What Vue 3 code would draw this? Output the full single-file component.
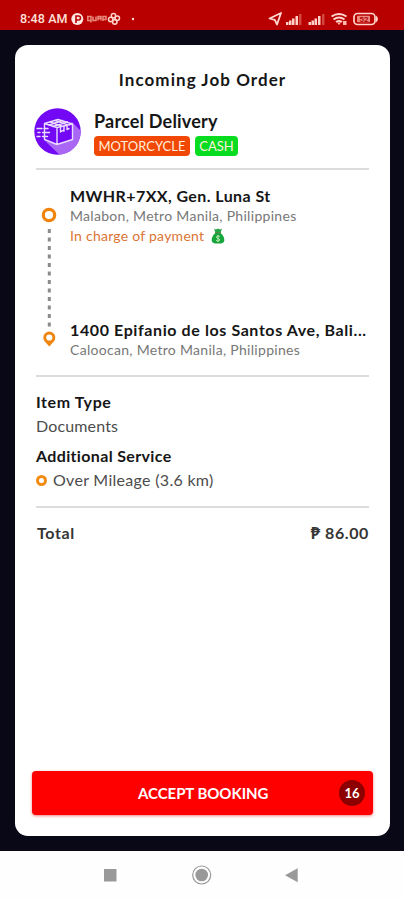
<script setup>
import { ref } from 'vue'

let time = ref('8:48 AM')
let battery = ref(52)
let countdown = ref(16)

let order = ref({
    service: 'Parcel Delivery',
    vehicle: 'MOTORCYCLE',
    payment: 'CASH',
    itemType: 'Documents',
    extras: ['Over Mileage (3.6 km)'],
    total: '86.00'
})

</script>

<template>
    <div class="screen">
        <header class="statusBar">
            <span class="time">{{ time }}</span>
            <svg class="notifs" width="68" height="14" viewBox="0 0 68 14">
                <circle cx="6.3" cy="7" r="6" fill="#ffe9e3" />
                <path d="M5 11V4h2.5a1.8 1.8 0 0 1 0 4H5" fill="none" stroke="#b80000" stroke-width="1.6" />
                <g fill="none" stroke="#e98b7c" stroke-width="1.5">
                    <path d="M20 4.5h-3.200v4H20zM20 8v2.500M22 4.500v4h3v-4M27 8.500v-4h3v4M27 6.500h3M32 9V4.500h3v3H32" />
                </g>
                <g fill="none" stroke="#ffd5cc" stroke-width="1.500">
                    <circle cx="42.500" cy="3.700" r="2.200" />
                    <circle cx="46.300" cy="6.200" r="2.200" />
                    <circle cx="43.800" cy="10" r="2.200" />
                    <circle cx="39.700" cy="7.500" r="2.200" />
                </g>
                <circle cx="62" cy="7" r="1.200" fill="#ffd5cc" />
            </svg>
            <svg class="system" width="114" height="16" viewBox="0 0 114 16">
                <path d="M1.500 7.500L13 2 9 13.500 6.800 8.800z" fill="none" stroke="#ffd9d2" stroke-width="1.800" stroke-linejoin="round" />
                <g fill="#ffd0c8">
                    <path d="M18 11h2.500v3H18zM21 9.500h2.500V14H21zM24 7.500h2.500V14H24zM27.500 5h2.500v9h-2.500z" />
                    <path d="M40.500 11H43v3h-2.500zM43.500 9.500H46V14h-2.500zM46.500 7.500H49V14h-2.500zM50 5h2.500v9H50z" />
                </g>
                <path d="M31 3h2.500v11H31zM54 3h2.500v11H54z" fill="#d2473f" />
                <g fill="none" stroke="#ffd5cc" stroke-width="2">
                    <path d="M63.500 5.500q7.500-5 15 0M65.500 8.500q5.500-4 11 0M68 11q3-2 6 0" />
                </g>
                <path d="M69 11.500h4L71 14zM75 10h3.500v4H75z" fill="#ffb7ad" />
                <rect x="86" y="2.500" width="21" height="11" rx="3.500" fill="none" stroke="#ffd5cc" stroke-width="1.700" />
                <path d="M108 4.500q4 3.500 0 7z" fill="#ffd5cc" />
                <rect x="89" y="4.700" width="13" height="6.600" rx="1" fill="#e98b80" />
                <text x="96" y="11" text-anchor="middle" class="battery">{{ battery }}</text>
            </svg>
        </header>

        <main class="stage">
            <section class="card">
                <h1>Incoming Job Order</h1>

                <div class="service">
                    <svg class="logo" width="47" height="47" viewBox="0 0 47 47">
                        <defs>
                            <clipPath id="disc">
                                <circle cx="23.500" cy="23.500" r="23.200" />
                            </clipPath>
                        </defs>
                        <g clip-path="url(#disc)">
                            <rect width="47" height="47" fill="#7208f4" />
                            <path d="M38 14l12 12v24H29L11 33l12 3z" fill="#a967f4" />
                        </g>
                        <g fill="none" stroke="#eadcff" stroke-width="1.400" stroke-linejoin="round" stroke-linecap="round">
                            <path d="M10.500 15.500L23 19.500v17L10.500 31.500zM23 19.500L38.500 16v15.500L23 36.500M10.500 15.500L24 11.500l14.500 4.500" fill="#7208f4" />
                            <path d="M15 17l13.500-4.500M19 18.500L33.500 14M16 14l11.500 4M21 12.500l12 4" />
                            <path d="M26.500 19v5l2-1.500 1.500.5v-5M33 17.500v4l2-1" />
                            <path d="M3 20.500h5M10 20.500h4M4 24.500h2M8.500 24.500h7M3 28.500h3M8.500 28.500h5" />
                        </g>
                    </svg>
                    <div>
                        <h2>{{ order.service }}</h2>
                        <div class="tags">
                            <span class="tag vehicle">{{ order.vehicle }}</span>
                            <span class="tag cash">{{ order.payment }}</span>
                        </div>
                    </div>
                </div>

                <div class="route">
                    <div class="track">
                        <svg width="16" height="140" viewBox="0 0 16 140">
                            <circle cx="8" cy="8" r="5.700" fill="none" stroke="#ef850d" stroke-width="3.200" />
                            <path d="M8.300 22V120" stroke="#8b8b8b" stroke-width="3" stroke-dasharray="4 4.500" />
                            <path d="M8.300 139.500L3.800 134.500a6 6 0 1 1 9 0z" fill="#ef850d" />
                            <circle cx="8.300" cy="130.500" r="3.100" fill="#fff" />
                        </svg>
                    </div>
                    <div class="stops">
                        <div class="stop pickup">
                            <h3 class="from">MWHR+7XX, Gen. Luna St</h3>
                            <p>Malabon, Metro Manila, Philippines</p>
                            <p class="payer">In charge of payment
                                <svg width="14" height="16" viewBox="0 0 14 16">
                                    <path d="M3 .8l2 .7L7 .5l2 1 2-.7-1.500 3.700H4.500z" fill="#20a642" />
                                    <path d="M4.500 5h5C12 7 13.500 9.500 13.300 12.500 13 15 11 15.500 7 15.500S1 15 .7 12.500C.5 9.500 2 7 4.500 5z" fill="#16a63c" />
                                    <path d="M4 4.700h6" stroke="#53733a" stroke-width="1" />
                                    <path d="M8.800 8.500C7 7.300 5 8.200 5.500 9.500s3.200.8 3.200 2.300-2.200 1.500-3.500.6M7 7v7" fill="none" stroke="#c5ecb9" stroke-width="1" />
                                </svg>
                            </p>
                        </div>
                        <div class="stop">
                            <h3 class="to">1400 Epifanio de los Santos Ave, Bali...</h3>
                            <p>Caloocan, Metro Manila, Philippines</p>
                        </div>
                    </div>
                </div>

                <div class="details">
                    <h3 class="itemLabel">Item Type</h3>
                    <p class="itemType">{{ order.itemType }}</p>
                    <h3 class="extraLabel">Additional Service</h3>
                    <p v-for="extra in order.extras" class="extra"><i class="ring"></i>{{ extra }}</p>
                </div>

                <div class="total">
                    <span>Total</span>
                    <span class="amount"><b>₱</b> {{ order.total }}</span>
                </div>

                <button class="accept">
                    <span class="acceptText">ACCEPT BOOKING</span>
                    <span class="countdown">{{ countdown }}</span>
                </button>
            </section>
        </main>

        <nav class="navBar">
            <svg width="404" height="49" viewBox="0 0 404 49">
                <rect x="104" y="18" width="12.500" height="12.500" fill="#999" />
                <circle cx="201.700" cy="24" r="9" fill="none" stroke="#999" stroke-width="1.200" />
                <circle cx="201.700" cy="24" r="6.300" fill="#999" />
                <path d="M285 24.300l12.700-7v14z" fill="#999" />
            </svg>
        </nav>
    </div>
</template>

<style>
body {
    margin: 0;
}
</style>

<style scoped>
.screen {
    display: flex;
    flex-direction: column;
    width: 404px;
    height: 900px;
    background-color: #090816;
    font-family: Lato, "Liberation Sans", sans-serif;
    color: #161616;
    overflow: hidden;
}

.statusBar {
    display: flex;
    box-sizing: border-box;
    height: 30px;
    padding: 11px 0 0 20px;
    background-color: #b80000;
}

.time {
    width: 51px;
    font: 500 12.5px/16px Roboto, sans-serif;
    letter-spacing: 0.1px;
    color: #ffe1da;
    white-space: nowrap;
}

.notifs {
    margin-top: 1px;
}

.system {
    margin-left: 129px;
}

.battery {
    font: bold 8px Roboto, sans-serif;
    fill: #b80000;
}

.stage {
    flex: 1;
    display: flex;
    padding: 15px 14px 15px 15px;
}

.card {
    flex: 1;
    display: flex;
    flex-direction: column;
    box-sizing: border-box;
    padding: 0 17px 21px;
    border-radius: 13px;
    background-color: #fff;
}

h1,
h2,
h3,
p {
    margin: 0;
    white-space: nowrap;
}

h1 {
    margin-top: 24px;
    font-size: 17px;
    line-height: 22px;
    letter-spacing: 1.05px;
    text-align: center;
}

.service {
    display: flex;
    gap: 13px;
    height: 77px;
    margin: 0 4px;
    border-bottom: 2px solid #dcdcdc;
}

.logo {
    margin: 17px 0 0 -2px;
}

h2 {
    margin-top: 19px;
    font-size: 18px;
    line-height: 22px;
    letter-spacing: 0.2px;
}

.tags {
    display: flex;
    gap: 5px;
    margin-top: 4px;
}

.tag {
    height: 20px;
    border-radius: 4px;
    font-size: 13px;
    line-height: 20px;
    text-align: center;
    color: #ffeedd;
}

.vehicle {
    width: 96px;
    background-color: #f14905;
}

.cash {
    width: 43px;
    background-color: #08dc20;
}

.route {
    display: flex;
    height: 205px;
    margin: 0 4px;
    border-bottom: 2px solid #dcdcdc;
}

.track {
    width: 29px;
    padding: 37px 0 0 5px;
    box-sizing: border-box;
}

.stops {
    padding: 15px 0 0 5px;
}

.pickup {
    height: 134px;
}

h3 {
    font-size: 16px;
    line-height: 22px;
}

.stop h3 {
    line-height: 21px;
}

.from {
    letter-spacing: 0.42px;
}

.to {
    letter-spacing: 0.6px;
}

.stop p {
    font-size: 14px;
    line-height: 20px;
    letter-spacing: 0.3px;
    color: #777;
}

.stop .payer {
    display: flex;
    gap: 7px;
    align-items: center;
    letter-spacing: 0.25px;
    color: #dc7434;
}

.details {
    height: 129px;
    margin: 0 4px;
    border-bottom: 2px solid #dcdcdc;
}

.itemLabel {
    margin-top: 14px;
    letter-spacing: 0.6px;
}

.itemType,
.extra {
    font-size: 16px;
    line-height: 26px;
    letter-spacing: 0.15px;
    color: #4c4c4c;
}

.extraLabel {
    margin-top: 6px;
    letter-spacing: 0.35px;
}

.extra {
    display: flex;
    align-items: center;
    letter-spacing: 0.3px;
}

.ring {
    width: 5px;
    height: 5px;
    margin-right: 6px;
    border: 2.5px solid #f28b12;
    border-width: 3px;
    border-radius: 50%;
}

.total {
    display: flex;
    justify-content: space-between;
    margin: 13px 4px 0 5px;
    font-size: 16px;
    font-weight: bold;
    line-height: 24px;
    letter-spacing: 0.6px;
    color: #353535;
}

.accept {
    display: flex;
    align-items: center;
    height: 44px;
    margin-top: auto;
    padding: 0 8px 0 106px;
    border: none;
    border-radius: 4px;
    background-color: #fe0000;
    box-shadow: 0 1px 3px #e5000080;
    font: bold 15px Lato, sans-serif;
    color: #fff;
}

.acceptText {
    letter-spacing: -0.05px;
    white-space: nowrap;
}

.countdown {
    width: 26px;
    height: 26px;
    margin-left: auto;
    border-radius: 50%;
    background-color: #8e0000;
    font-size: 13px;
    line-height: 26px;
}

.navBar {
    height: 49px;
    background-color: #fefefe;
}

.navBar svg {
    display: block;
}
</style>
